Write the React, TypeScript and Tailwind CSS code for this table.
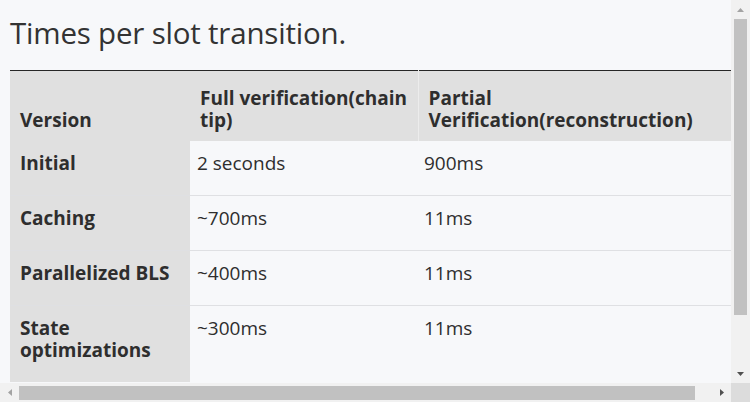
import React from 'react';

const rows = [
  { version: ['Initial'], full: '2 seconds', partial: '900ms' },
  { version: ['Caching'], full: '~700ms', partial: '11ms' },
  { version: ['Parallelized BLS'], full: '~400ms', partial: '11ms' },
  { version: ['State', 'optimizations'], full: '~300ms', partial: '11ms' },
];

const Arrow = ({ dir, dark }: { dir: 'up' | 'down' | 'left' | 'right'; dark?: boolean }) => {
  const pts = {
    up: '0,4 3.5,0 7,4',
    down: '0,0 7,0 3.5,4',
    left: '4,0 4,7 0,3.5',
    right: '0,0 0,7 4,3.5',
  }[dir];
  const w = dir === 'up' || dir === 'down' ? 7 : 4;
  const h = dir === 'up' || dir === 'down' ? 4 : 7;
  return (
    <svg width={w} height={h} viewBox={`0 0 ${w} ${h}`}>
      <polygon points={pts} fill={dark ? '#505050' : '#a3a3a3'} />
    </svg>
  );
};

export default function App() {
  return (
    <div className="flex h-[402px] w-[750px] flex-col overflow-hidden bg-[#f7f8fa]">
      <div className="flex min-h-0 flex-1">
        {/* page content */}
        <div
          className="w-[731px] overflow-hidden px-[10px] text-[#2e2e2e]"
          style={{ fontFamily: '"Open Sans", "DejaVu Sans", sans-serif' }}
        >
          <h2 className="pt-[14px] text-[29.5px] leading-[38px] font-normal tracking-[-0.2px] text-[#333]">
            Times per slot transition.
          </h2>

          <table className="mt-[18px] w-[760px] border-collapse border-t border-[#262626] text-[19px] leading-[22px]">
            <thead>
              <tr className="bg-[#e0e0e0]">
                <th className="w-[180px] px-[10px] pt-[16px] pb-[10px] text-left align-bottom font-bold">
                  Version
                </th>
                <th className="w-[228px] border-r border-[#ececec] px-[10px] pt-[16px] pb-[10px] text-left align-bottom font-bold">
                  Full verification(chain tip)
                </th>
                <th className="px-[10px] pt-[16px] pb-[10px] text-left align-bottom font-bold">
                  Partial Verification(reconstruction)
                </th>
              </tr>
            </thead>
            <tbody>
              {rows.map((r, i) => (
                <tr key={i} className={i > 0 ? 'border-t border-[#dfe0e3]' : ''}>
                  <th className="bg-[#e0e0e0] px-[10px] pt-[11px] pb-[21px] text-left align-top font-bold">
                    {r.version.map((v, j) => (
                      <div key={j}>{v}</div>
                    ))}
                  </th>
                  <td className="px-[7px] pt-[11px] pb-[21px] align-top font-normal">{r.full}</td>
                  <td className="px-[6px] pt-[11px] pb-[21px] align-top font-normal">{r.partial}</td>
                </tr>
              ))}
            </tbody>
          </table>
        </div>

        {/* vertical scrollbar */}
        <div className="flex w-[19px] flex-col bg-[#f1f1f1]">
          <div className="flex h-[19px] items-center justify-center">
            <Arrow dir="up" />
          </div>
          <div className="mx-[3px] h-[296px] bg-[#c1c1c1]" />
          <div className="flex-1" />
          <div className="flex h-[19px] items-center justify-center">
            <Arrow dir="down" dark />
          </div>
        </div>
      </div>

      {/* horizontal scrollbar */}
      <div className="flex h-[19px]">
        <div className="flex w-[731px] items-stretch bg-[#f1f1f1]">
          <div className="flex w-[19px] items-center justify-center">
            <Arrow dir="left" />
          </div>
          <div className="mt-[3px] mb-[2px] w-[676px] bg-[#c1c1c1]" />
          <div className="flex-1" />
          <div className="flex w-[19px] items-center justify-center">
            <Arrow dir="right" dark />
          </div>
        </div>
        <div className="w-[19px] bg-[#dcdcdc]" />
      </div>
    </div>
  );
}
